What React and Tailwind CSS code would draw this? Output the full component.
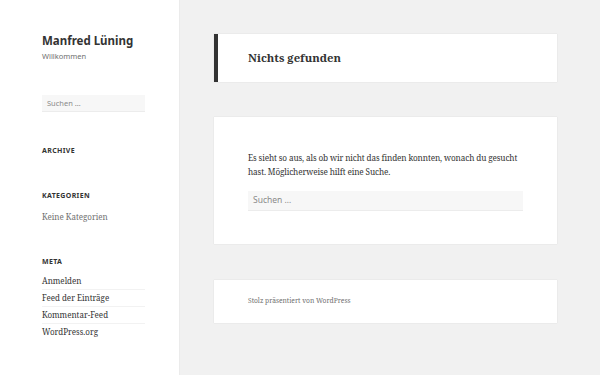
import React from 'react'

const sans = { fontFamily: '"Noto Sans", "Open Sans", sans-serif' }
const serif = { fontFamily: '"Noto Serif", "Liberation Serif", serif' }

function SearchBox({ className = '' }) {
  return (
    <div className={`bg-[#f7f7f7] border-b border-[#ececec] text-[#8a8a8a] flex items-center px-[5px] ${className}`} style={sans}>
      Suchen …
    </div>
  )
}

function WidgetTitle({ children }) {
  return <h2 className="text-[7px] font-bold tracking-[0.05em] uppercase text-[#333]" style={sans}>{children}</h2>
}

export default function App() {
  return (
    <div className="w-[600px] h-[375px] flex bg-[#f1f1f1] overflow-hidden">
      <aside className="w-[179px] shrink-0 bg-white shadow-[0_0_1px_rgba(0,0,0,0.15)] pl-[42px] pr-[34px] pt-[33px]">
        <h1 className="text-[11.5px] font-bold text-[#333] leading-[16px] whitespace-nowrap" style={sans}>Manfred Lüning</h1>
        <p className="text-[7.5px] text-[#707070] mt-[2px]" style={sans}>Willkommen</p>

        <SearchBox className="mt-[33px] h-[17px] text-[7.5px]" />

        <div className="mt-[34px]"><WidgetTitle>Archive</WidgetTitle></div>

        <div className="mt-[34px]"><WidgetTitle>Kategorien</WidgetTitle></div>
        <p className="mt-[10px] text-[8px] text-[#707070]" style={serif}>Keine Kategorien</p>

        <div className="mt-[34px]"><WidgetTitle>Meta</WidgetTitle></div>
        <ul className="mt-[5px] text-[8px] text-[#333]" style={serif}>
          {['Anmelden', 'Feed der Einträge', 'Kommentar-Feed', 'WordPress.org'].map((t, i) => (
            <li key={t} className={`py-[4px] leading-[8px] ${i < 3 ? 'border-b border-[#f2f2f2]' : ''}`}>{t}</li>
          ))}
        </ul>
      </aside>

      <main className="flex-1 pl-[35px] pr-[43px] pt-[34px]">
        <div className="bg-white shadow-[0_0_1px_rgba(0,0,0,0.15)] border-l-[4px] border-[#333] h-[48px] flex items-center pl-[30px]">
          <h1 className="text-[11.3px] font-bold text-[#333]" style={serif}>Nichts gefunden</h1>
        </div>

        <div className="mt-[35px] bg-white shadow-[0_0_1px_rgba(0,0,0,0.15)] h-[127px] pl-[34px] pr-[34px] pt-[34px]">
          <p className="text-[8.2px] tracking-[-0.12px] leading-[14px] text-[#333]" style={serif}>
            Es sieht so aus, als ob wir nicht das finden konnten, wonach du gesucht hast. Möglicherweise hilft eine Suche.
          </p>
          <SearchBox className="mt-[12px] h-[20px] text-[8.5px]" />
        </div>

        <footer className="mt-[36px] bg-white shadow-[0_0_1px_rgba(0,0,0,0.15)] h-[43px] flex items-center pl-[34px]">
          <p className="text-[6.7px] text-[#707070]" style={serif}>Stolz präsentiert von WordPress</p>
        </footer>
      </main>
    </div>
  )
}
